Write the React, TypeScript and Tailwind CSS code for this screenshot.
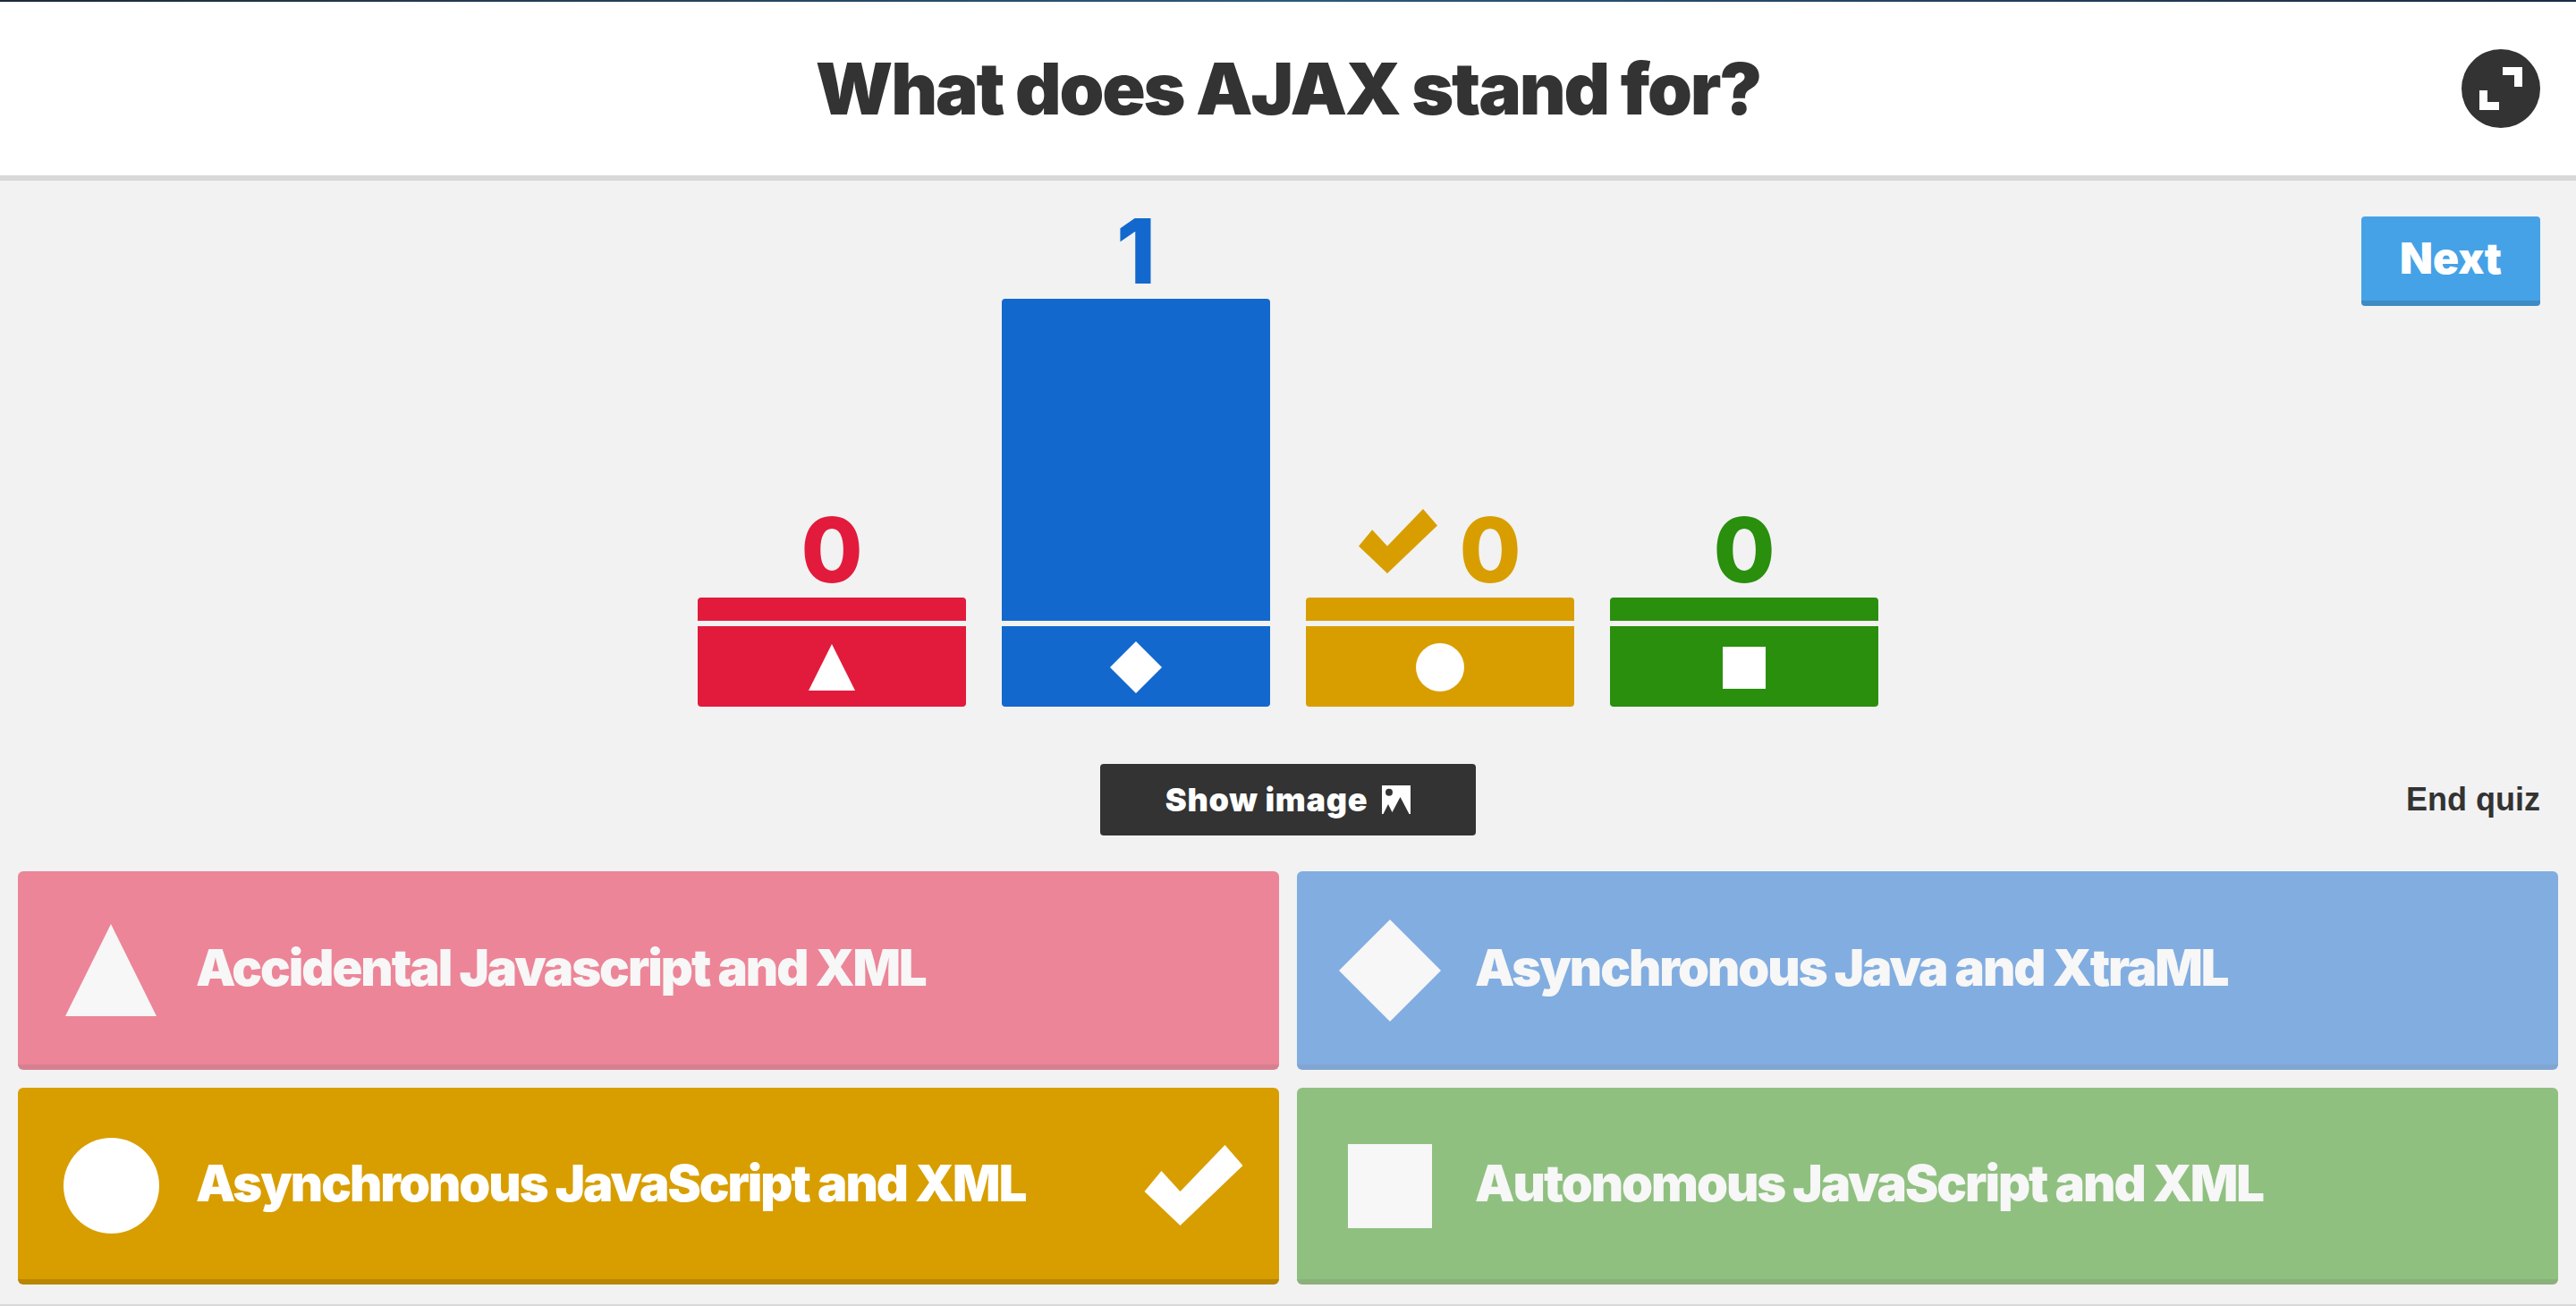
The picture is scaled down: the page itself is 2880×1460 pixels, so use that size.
import React from 'react';

const heading = '[font-family:Inter,"Liberation_Sans",sans-serif]';

function Shape({ kind, className }: { kind: string; className: string }) {
  return (
    <svg viewBox="0 0 100 100" preserveAspectRatio="none" className={className} fill="currentColor">
      {kind === 'triangle' && <polygon points="50,0 100,100 0,100" />}
      {kind === 'diamond' && <polygon points="50,0 100,50 50,100 0,50" />}
      {kind === 'circle' && <ellipse cx="50" cy="50" rx="50" ry="50" />}
      {kind === 'square' && <rect width="100" height="100" />}
    </svg>
  );
}

function Check({ className }: { className: string }) {
  return (
    <svg viewBox="0 0 110 90" className={className} fill="currentColor">
      <polygon points="0,52 19,29 40,52 90,0 110,23 40,90" />
    </svg>
  );
}

function Bar({
  count,
  kind,
  top,
  text,
  bg,
  shape,
  correct,
}: {
  count: number;
  kind: string;
  top: string;
  text: string;
  bg: string;
  shape: string;
  correct?: boolean;
}) {
  return (
    <div className="w-[300px] flex flex-col">
      <div className={`h-[110px] flex items-center justify-center gap-[24px] ${text}`}>
        {correct && <Check className="w-[88px] h-[72px] mb-[16px]" />}
        <span className={`${heading} text-[100px] leading-none font-extrabold mt-[4px]`}>{count}</span>
      </div>
      <div className={`${top} ${bg} rounded-t-[4px]`} />
      <div className="h-[6px]" />
      <div className={`h-[90px] pt-[2px] ${bg} rounded-b-[4px] flex items-center justify-center text-white`}>
        <Shape kind={kind} className={shape} />
      </div>
    </div>
  );
}

function Answer({
  label,
  kind,
  height,
  bg,
  edge,
  shape,
  text,
  correct,
}: {
  label: string;
  kind: string;
  height: string;
  bg: string;
  edge: string;
  shape: string;
  text: string;
  correct?: boolean;
}) {
  return (
    <div className={`${height} rounded-[6px] border-b-[6px] ${bg} ${edge} flex items-center`}>
      <div className={`w-[199px] shrink-0 pl-[9px] pt-[5px] flex justify-center ${text}`}>
        <Shape kind={kind} className={shape} />
      </div>
      <span className={`${heading} text-[56px] leading-none font-black tracking-[-2px] ${text}`}>{label}</span>
      {correct && <Check className="ml-auto mr-[40px] mt-[4px] w-[111px] h-[90px] text-white" />}
    </div>
  );
}

export default function App() {
  return (
    <div className="w-[2880px] h-[1460px] overflow-hidden bg-[#f2f2f2] flex flex-col border-b-2 border-[#d8d8d8]">
      <div className="h-[2px] bg-gradient-to-r from-[#1d2a3a] via-[#2b5a7a] to-[#1c2b44]" />
      <header className="h-[200px] bg-white border-b-[6px] border-[#d8d8d8] grid grid-cols-[1fr_auto_1fr] items-center px-10">
        <div />
        <h1 className={`${heading} text-[80px] leading-none font-black tracking-[-2.2px] text-[#333333]`}>
          What does AJAX stand for?
        </h1>
        <button className="justify-self-end w-[88px] h-[88px] rounded-full bg-[#333333] flex items-center justify-center">
          <svg viewBox="0 0 48 48" className="w-[48px] h-[48px]" fill="white">
            <path d="M26 0h22v22h-9V9H26z" />
            <path d="M0 26h9v13h13v9H0z" />
          </svg>
        </button>
      </header>

      <div className="pt-[16px] grid grid-cols-[1fr_auto_1fr] items-start px-10">
        <div />
        <div className="h-[572px] flex items-end gap-10">
          <Bar count={0} kind="triangle" top="h-[26px]" text="text-[#e21b3c]" bg="bg-[#e21b3c]" shape="w-[52px] h-[52px]" />
          <Bar count={1} kind="diamond" top="h-[360px]" text="text-[#1368ce]" bg="bg-[#1368ce]" shape="w-[58px] h-[58px]" />
          <Bar count={0} kind="circle" top="h-[26px]" text="text-[#d89e00]" bg="bg-[#d89e00]" shape="w-[54px] h-[54px]" correct />
          <Bar count={0} kind="square" top="h-[26px]" text="text-[#298f0d]" bg="bg-[#298f0d]" shape="w-[48px] h-[47px]" />
        </div>
        <button className={`justify-self-end mt-[24px] w-[200px] h-[100px] rounded-[4px] border-b-[6px] bg-[#46a2e6] border-[#3d8bc4] text-white ${heading} text-[48px] font-black`}>
          Next
        </button>
      </div>

      <div className="mt-[64px] grid grid-cols-[1fr_420px_1fr] items-center px-10">
        <div />
        <button className={`h-[80px] rounded-[4px] bg-[#333333] text-white flex items-center justify-center gap-[16px] ${heading} text-[36px] font-black tracking-[0.7px]`}>
          Show image
          <svg viewBox="0 0 32 32" className="w-[32px] h-[32px]">
            <rect width="32" height="32" fill="white" />
            <circle cx="8" cy="7.7" r="4" fill="#333333" />
            <polygon points="1.5,32 7,21 11.5,30 20.5,13 30.5,32" fill="#333333" />
          </svg>
        </button>
        <span className="justify-self-end font-['Liberation_Sans',sans-serif] text-[36px] font-bold text-[#333333]">End quiz</span>
      </div>

      <div className="mt-[40px] px-5 grid grid-cols-2 gap-x-5 gap-y-5">
        <Answer label="Accidental Javascript and XML" kind="triangle" height="h-[222px]" bg="bg-[#ec8598]" edge="border-[#d6808f]" shape="w-[102px] h-[103px]" text="text-[#f7f7f7]" />
        <Answer label="Asynchronous Java and XtraML" kind="diamond" height="h-[222px]" bg="bg-[#82ade0]" edge="border-[#80a5d2]" shape="w-[114px] h-[114px]" text="text-[#f7f7f7]" />
        <Answer label="Asynchronous JavaScript and XML" kind="circle" height="h-[220px]" bg="bg-[#d89e00]" edge="border-[#b88600]" shape="w-[107px] h-[107px]" text="text-white" correct />
        <Answer label="Autonomous JavaScript and XML" kind="square" height="h-[220px]" bg="bg-[#8fc080]" edge="border-[#8bb07c]" shape="w-[94px] h-[94px]" text="text-[#f7f7f7]" />
      </div>
    </div>
  );
}
